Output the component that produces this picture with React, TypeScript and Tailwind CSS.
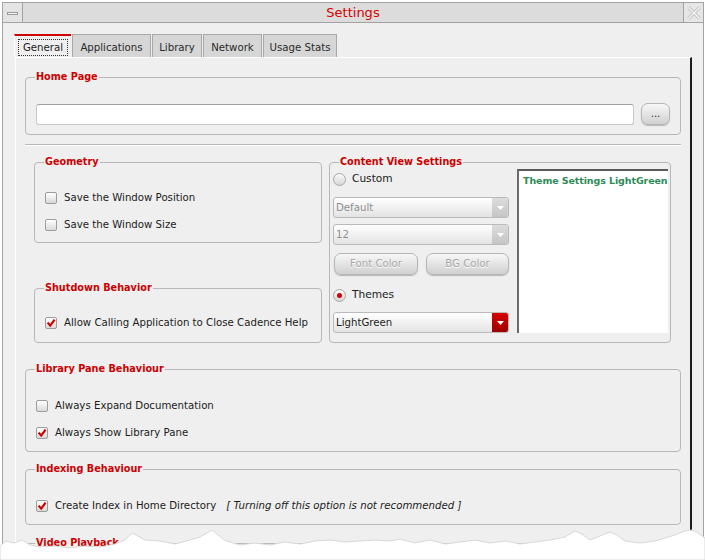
import React from "react";

function Check({ on }: { on?: boolean }) {
  return (
    <span className="relative h-[12px] w-[12px] shrink-0 rounded-[2px] border border-[#9d9d9d] bg-linear-to-b from-white to-[#d9d9d9]">
      {on && (
        <svg width="10" height="10" viewBox="0 0 10 10" className="absolute left-[0px] top-[0px]">
          <path d="M1.6 4.6 L4.2 7.6 L8.6 1.6" fill="none" stroke="#cc0000" strokeWidth="2.2" />
        </svg>
      )}
    </span>
  );
}

function Radio({ on }: { on?: boolean }) {
  return (
    <span className="flex h-[13px] w-[13px] shrink-0 items-center justify-center rounded-full border border-[#a6a6a6] bg-linear-to-b from-[#fbfbfb] to-[#d6d6d6]">
      {on && <span className="h-[5px] w-[5px] rounded-full bg-[#cc0000]" />}
    </span>
  );
}

function Combo({ text, disabled, red }: { text: string; disabled?: boolean; red?: boolean }) {
  return (
    <div className="flex h-[21px] overflow-hidden rounded-[3px] border border-[#bababa] bg-linear-to-b from-white to-[#e3e3e3]">
      <span className={`flex-1 pl-[2px] leading-[19px] ${disabled ? "text-[#8f8f8f]" : "text-[#1e1e1e]"}`}>{text}</span>
      <span
        className={`flex w-[16px] items-center justify-center ${
          red ? "bg-linear-to-b from-[#d80000] to-[#9c0000]" : "bg-linear-to-b from-[#dcdcdc] to-[#c6c6c6]"
        }`}
      >
        <svg width="7" height="4" viewBox="0 0 7 4">
          <path d="M0 0 L7 0 L3.5 4 Z" fill="white" />
        </svg>
      </span>
    </div>
  );
}

function Btn({ children, w }: { children: React.ReactNode; w: string }) {
  return (
    <div
      className={`flex h-[22px] ${w} items-center justify-center rounded-[7px] border border-[#b6b6b6] bg-linear-to-b from-[#f8f8f8] to-[#d0d0d0] text-[#a8a8a8] shadow-[0_1px_1px_rgba(0,0,0,0.25)] [text-shadow:0_1px_0_white]`}
    >
      {children}
    </div>
  );
}

function Group({ title, className, children }: { title: string; className: string; children?: React.ReactNode }) {
  return (
    <fieldset className={`rounded-[4px] border border-[#b8b8b8] ${className}`}>
      <legend className="ml-[9px] px-[1px] text-[9.7px] font-bold leading-[14px] text-[#cc0000]">{title}</legend>
      {children}
    </fieldset>
  );
}

function Row({ on, children }: { on?: boolean; children: React.ReactNode }) {
  return (
    <div className="flex h-[16px] items-center gap-[7px]">
      <Check on={on} />
      {children}
    </div>
  );
}

const tabs = [
  { name: "Applications", w: "w-[79px]" },
  { name: "Library", w: "w-[50px]" },
  { name: "Network", w: "w-[59px]" },
  { name: "Usage Stats", w: "w-[74px]" },
];

export default function App() {
  return (
    <div className="relative h-[560px] w-[705px] overflow-hidden bg-white font-['DejaVu_Sans',sans-serif] text-[10.2px] text-[#1c1c1c]">
      <div className="ml-[2px] mt-[2px] w-[702px] border border-[#a3a3a3] bg-[#efefef] pb-[40px]">
        {/* title bar */}
        <div className="flex h-[20px] border-b border-[#a3a3a3]">
          <div className="flex w-[20px] items-center justify-center border-r border-[#a3a3a3] bg-[#e4e4e4]">
            <span className="mt-[2px] h-[3px] w-[11px] border border-[#9a9a9a] bg-[#f6f6f6]" />
          </div>
          <div className="flex flex-1 items-center justify-center bg-[#dcdcdc] text-[13px] text-[#d40000]">Settings</div>
          <div className="flex w-[20px] items-center justify-center border-l border-[#a3a3a3] bg-[#e6e6e6]">
            <svg width="14" height="14" viewBox="0 0 14 14">
              <path d="M1.5 1.5 L12.5 12.5 M12.5 1.5 L1.5 12.5" stroke="#c4c4c4" strokeWidth="3.2" />
              <path d="M1.5 1.5 L12.5 12.5 M12.5 1.5 L1.5 12.5" stroke="#f4f4f4" strokeWidth="1.4" />
            </svg>
          </div>
        </div>

        {/* tabs */}
        <div className="ml-[11px] mt-[11px] flex h-[23px] items-end gap-[1px]">
          <div className="flex h-[23px] w-[57px] items-center justify-center border-l border-t-2 border-l-white border-t-[#cc0000] bg-[#efefef] pt-[1px]">
            <span className="border border-dotted border-[#333] px-[4px] leading-[15px]">General</span>
          </div>
          {tabs.map((t) => (
            <div
              key={t.name}
              className={`flex h-[23px] ${t.w} items-center justify-center border-l border-r border-t border-[#a8a8a8] bg-[#d6d6d6] pt-[3px] text-[#2a2a2a]`}
            >
              {t.name}
            </div>
          ))}
        </div>

        {/* tab page */}
        <div className="ml-[12px] w-[677px] border-l border-r-2 border-t border-l-white border-r-[#1c1c1c] border-t-white px-[9px] pt-[12px] pb-[10px]">
          <Group title="Home Page" className="h-[65px]">
            <div className="flex items-center gap-[7px] px-[10px] pt-[19px]">
              <div className="h-[21px] flex-1 rounded-[3px] border border-[#c8c8c8] border-t-[#a0a0a0] bg-white" />
              <Btn w="w-[29px]">
                <span className="text-[#333] [text-shadow:none]">...</span>
              </Btn>
            </div>
          </Group>

          <div className="mt-[9px] h-[2px] border-b border-t border-b-white border-t-[#b8b8b8]" />

          <div className="ml-[9px] mt-[9px] flex h-[188px] gap-[7px]">
            <div className="flex w-[288px] flex-col justify-between">
              <Group title="Geometry" className="h-[88px]">
                <div className="flex flex-col gap-[11px] pl-[10px] pt-[21px]">
                  <Row>Save the Window Position</Row>
                  <Row>Save the Window Size</Row>
                </div>
              </Group>
              <Group title="Shutdown Behavior" className="h-[62px]">
                <div className="pl-[10px] pt-[20px]">
                  <Row on>Allow Calling Application to Close Cadence Help</Row>
                </div>
              </Group>
            </div>

            <Group title="Content View Settings" className="h-[188px] w-[342px]">
              <div className="flex gap-[8px] pl-[3px] pr-[2px]">
                <div className="flex w-[176px] flex-col">
                  <div className="mt-[2px] flex h-[16px] items-center gap-[6px]">
                    <Radio />
                    <span className="text-[10.6px]">Custom</span>
                  </div>
                  <div className="mt-[10px]">
                    <Combo text="Default" disabled />
                  </div>
                  <div className="mt-[6px]">
                    <Combo text="12" disabled />
                  </div>
                  <div className="mt-[8px] flex gap-[8px] pl-[1px]">
                    <Btn w="w-[84px]">Font Color</Btn>
                    <Btn w="w-[83px]">BG Color</Btn>
                  </div>
                  <div className="mt-[12px] flex h-[16px] items-center gap-[6px]">
                    <Radio on />
                    <span className="text-[10.6px]">Themes</span>
                  </div>
                  <div className="mt-[9px]">
                    <Combo text="LightGreen" red />
                  </div>
                </div>
                <div className="h-[164px] w-[151px] overflow-hidden border-l-2 border-t-2 border-l-[#6a6a6a] border-t-[#5a5a5a] bg-white pl-[4px] pt-[2px]">
                  <span className="whitespace-nowrap text-[9.5px] font-bold tracking-[-0.1px] text-[#2e8b57]">
                    Theme Settings LightGreen
                  </span>
                </div>
              </div>
            </Group>
          </div>

          <Group title="Library Pane Behaviour" className="mt-[19px] h-[90px]">
            <div className="flex flex-col gap-[11px] pl-[10px] pt-[22px]">
              <Row>Always Expand Documentation</Row>
              <Row on>Always Show Library Pane</Row>
            </div>
          </Group>

          <Group title="Indexing Behaviour" className="mt-[10px] h-[63px]">
            <div className="pl-[10px] pt-[22px]">
              <Row on>
                Create Index in Home Directory
                <span className="ml-[3px] italic">[ Turning off this option is not recommended ]</span>
              </Row>
            </div>
          </Group>

          <Group title="Video Playback" className="mt-[11px] h-[60px]" />
        </div>
      </div>

      {/* torn paper edge */}
      <svg className="absolute bottom-0 left-0" width="705" height="32" viewBox="0 528 705 32">
        <path
          d="M0 546 L6 541 L14 543 L22 540 L30 545 L40 547 L55 546 L70 548 L85 546 L100 547 L115 544 L125 540 L132 533 L138 536 L145 540 L160 541 L175 544 L190 540 L200 537 L207 533 L212 530 L218 535 L226 541 L240 545 L255 543 L270 545 L285 542 L300 544 L315 541 L330 540 L345 542 L360 541 L375 540 L390 541 L400 539 L415 543 L430 540 L445 544 L460 542 L475 540 L490 543 L505 541 L520 544 L535 542 L550 540 L565 537 L575 531 L582 534 L590 540 L600 536 L610 532 L617 535 L625 541 L640 543 L655 541 L665 538 L675 535 L685 531 L692 530 L698 533 L705 538 L705 560 L0 560 Z"
          fill="white"
          stroke="#d8d8d8"
          strokeWidth="1"
        />
      </svg>
    </div>
  );
}
